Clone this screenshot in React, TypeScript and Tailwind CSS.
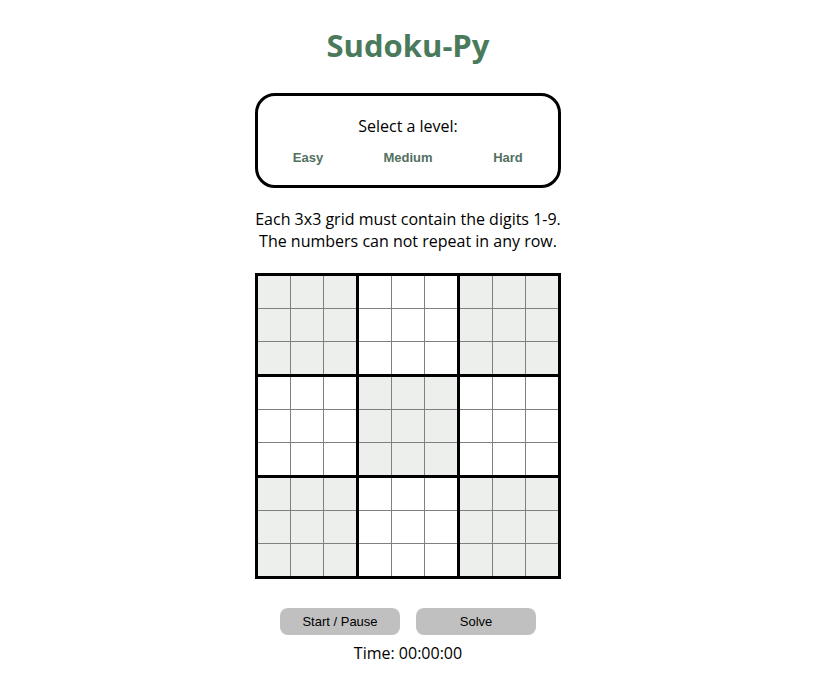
import React from 'react';

const FONT = { fontFamily: '"Open Sans", "Century Gothic", sans-serif' };

const shaded = (box: number) => box % 2 === 0;

const Cell: React.FC<{ tint: boolean }> = ({ tint }) => (
  <div className={`w-[32px] h-[32px] ${tint ? 'bg-[#ecefec]' : 'bg-white'}`}></div>
);

const Box: React.FC<{ index: number }> = ({ index }) => (
  <div className="grid grid-cols-3 gap-px bg-[#808080]">
    {Array.from({ length: 9 }).map((_, i) => (
      <Cell key={i} tint={shaded(index)} />
    ))}
  </div>
);

export default function App() {
  return (
    <div className="w-[816px] flex flex-col items-center text-black" style={FONT}>
      <h1 className="mt-[25px] h-[40px] leading-[40px] text-[31px] font-bold text-[#4a7a5c]">Sudoku-Py</h1>

      {/* Level picker */}
      <div className="mt-[28px] w-[306px] h-[95px] border-[3px] border-black rounded-[20px] flex flex-col items-center">
        <p className="mt-[20px] text-[16px] leading-[20px]">Select a level:</p>
        <div className="mt-[14px] w-full grid grid-cols-3 text-[13px] leading-[16px] font-bold text-[#52705f] text-center" style={{ fontFamily: '"Liberation Sans", Arial, sans-serif' }}>
          <span>Easy</span>
          <span>Medium</span>
          <span>Hard</span>
        </div>
      </div>

      <div className="mt-[20px] text-center text-[16px] leading-[22px]">
        <p>Each 3x3 grid must contain the digits 1-9.</p>
        <p>The numbers can not repeat in any row.</p>
      </div>

      {/* Board */}
      <div className="mt-[21px] grid grid-cols-3 gap-[3px] bg-black p-[3px]">
        {Array.from({ length: 9 }).map((_, i) => (
          <Box key={i} index={i} />
        ))}
      </div>

      <div className="mt-[29px] flex gap-4 text-[13px]" style={{ fontFamily: '"Liberation Sans", Arial, sans-serif' }}>
        <button className="w-[120px] h-[27px] rounded-[8px] bg-[#c0c0c0]">Start / Pause</button>
        <button className="w-[120px] h-[27px] rounded-[8px] bg-[#c0c0c0]">Solve</button>
      </div>

      <p className="mt-[8px] text-[16px] leading-[20px]">Time: 00:00:00</p>
    </div>
  );
}
